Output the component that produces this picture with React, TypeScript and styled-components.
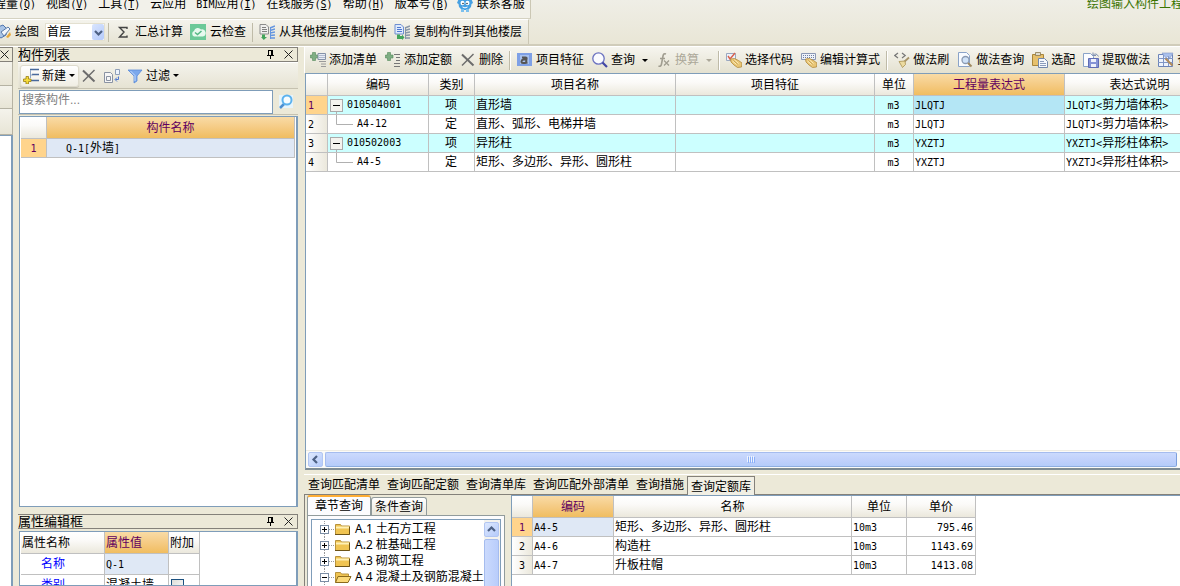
import React from "react";
import styled, { createGlobalStyle, css } from "styled-components";

const line = "#c0c0c0";
const blue = "#7f9db9";
const headGradient = "linear-gradient(#ffffff, #fbfaf8 40%, #ebe8dc)";
const hotGradient = "linear-gradient(#f9dba6, #f5cb84 50%, #f0bd60)";

const Global = createGlobalStyle`
  * { box-sizing: border-box; }
  html, body { margin: 0; height: 100%; background: #ece9d8; }
  body, button, input, select, table {
    font-family: "Liberation Sans", "Noto Sans CJK SC", sans-serif;
    font-size: 12px;
    line-height: 16px;
    color: #000;
  }
  button { border: 0; padding: 0; background: none; white-space: nowrap; }
`;

const Shell = styled.div`
  display: flex;
  flex-direction: column;
  height: 100vh;
  overflow: hidden;
  background: #ece9d8;
`;

const Top = styled.header`
  display: flex;
  justify-content: space-between;
  height: 46px;
  flex: none;
  background: linear-gradient(#efeee6, #e9e6d6);
  border-bottom: 2px solid #d0ccba;
  white-space: nowrap;
`;

const Bars = styled.div`
  flex: none;
`;

const MenuBar = styled.nav`
  display: flex;
  gap: 10px;
  height: 19px;
  width: 531px;
  overflow: hidden;
  background: #f2f1ea;
  border-right: 1px solid #cbc7b4;
  border-bottom: 1px solid #d5d2c2;
`;

const MenuItem = styled.button<{ $lead?: boolean; $tight?: boolean }>`
  flex: none;
  display: flex;
  align-items: center;
  gap: 4px;
  height: 16px;
  margin-top: -4px;
  margin-left: ${(p) => (p.$lead ? "-6px" : p.$tight ? "-2px" : "0")};
`;

const Code = styled.span`
  font-family: "DejaVu Sans Mono", "Noto Sans CJK SC", monospace;
  font-size: 10px;
`;

const Project = styled.div`
  margin: -4px -15px 0 0;
  color: #3a7400;
`;

const TopTools = styled.div`
  display: flex;
  align-items: center;
  gap: 7px;
  height: 25px;
  width: 529px;
  overflow: hidden;
  background: linear-gradient(#f4f3ec, #e6e3d3);
  border-top: 1px solid #fff;
  border-right: 1px solid #cbc7b4;
`;

const Tool = styled.button<{ $gap?: number; $off?: boolean; $lead?: boolean }>`
  flex: none;
  display: flex;
  align-items: center;
  gap: ${(p) => p.$gap ?? 3}px;
  height: 20px;
  margin-left: ${(p) => (p.$lead ? "-5px" : "0")};
  color: ${(p) => (p.$off ? "#aca899" : "#000")};
  svg { flex: none; }
`;

const Sep = styled.span<{ $w?: number }>`
  flex: none;
  width: ${(p) => p.$w ?? 2}px;
  height: 19px;
  margin: 0 -${(p) => p.$w ?? 2}px;
  background: #bfbba8;
  border-right: ${(p) => (p.$w === 1 ? "0" : "1px solid #fff")};
`;

const Caret = styled.i<{ $near?: boolean }>`
  width: 6px;
  margin-left: ${(p) => (p.$near ? 0 : 4)}px;
  border: 3px solid transparent;
  border-top-color: currentColor;
  border-bottom: 0;
`;

const FloorBox = styled.div`
  position: relative;
  flex: none;
  width: 60px;
  height: 18px;
  margin: 0 -3px 0 -1px;
`;

const Floor = styled.select`
  appearance: none;
  width: 100%;
  height: 100%;
  border: 1px solid #e3e0d0;
  border-radius: 0;
  background: #fff;
  padding: 0 0 0 1px;
  line-height: 14px;
`;

const FloorArrow = styled.span`
  position: absolute;
  right: 1px;
  top: 1px;
  width: 12px;
  height: 16px;
  display: grid;
  place-items: center;
  background: linear-gradient(135deg, #d9e5fe, #b4cafb);
  border-radius: 2px;
  pointer-events: none;
`;

const Body = styled.div`
  flex: 1;
  min-height: 0;
  display: flex;
  gap: 5px;
  border-top: 1px solid #fff;
`;

const Edge = styled.aside`
  flex: none;
  width: 13px;
  display: flex;
  flex-direction: column;
`;

const EdgeTitle = styled.div`
  height: 15px;
  border: 1px solid #84817a;
  border-left: 0;
  display: flex;
  align-items: center;
`;

const EdgeBar = styled.div<{ $h: number }>`
  height: ${(p) => p.$h}px;
  background: linear-gradient(#f4f3ec, #e8e5d6);
  border-right: 1px solid #b5b2a3;
  border-bottom: 1px solid #b5b2a3;
`;

const EdgeView = styled.div`
  flex: 1;
  background: #fff;
  border-top: 1px solid ${blue};
  border-right: 2px solid ${blue};
`;

const Side = styled.aside`
  flex: none;
  width: 280px;
  display: flex;
  flex-direction: column;
`;

const Dock = styled.section<{ $grow?: boolean }>`
  flex: ${(p) => (p.$grow ? "1" : "none")};
  height: ${(p) => (p.$grow ? "auto" : "72px")};
  min-height: 0;
  overflow: hidden;
  display: flex;
  flex-direction: column;
  margin-top: ${(p) => (p.$grow ? "0" : "7px")};
`;

const DockTitle = styled.div`
  flex: none;
  display: flex;
  align-items: center;
  height: 15px;
  border: 1px solid #84817a;
  border-left: 0;
  h2 {
    flex: 1;
    margin: 0;
    font-size: 13px;
    font-weight: 400;
    line-height: 13px;
  }
`;

const TitleButton = styled.button`
  display: grid;
  place-items: center;
  width: 18px;
  height: 13px;
`;

const DockTools = styled.div`
  flex: none;
  display: flex;
  align-items: center;
  gap: 7px;
  height: 27px;
  padding-left: 2px;
  background: linear-gradient(#f4f3ec, #e6e3d3);
  border-bottom: 1px solid #c6c2b0;
  border-top: 1px solid #fff;
`;

const NewButton = styled(Tool)`
  height: 22px;
  padding: 0 3px 0 2px;
  margin-right: -5px;
  border: 1px solid #dedbcd;
  border-radius: 3px;
  background: linear-gradient(#fff, #f0eee4);
  box-shadow: 0 1px 1px #b9b6a8;
`;

const SearchRow = styled.div`
  flex: none;
  display: flex;
  align-items: center;
  height: 26px;
  border-bottom: 1px solid #c6c2b0;
  input {
    flex: 1;
    min-width: 0;
    height: 24px;
    margin-left: 1px;
    border: 1px solid ${blue};
    background: #fff;
    padding: 0 2px 4px;
  }
  input::placeholder { color: #808080; opacity: 1; }
`;

const SearchButton = styled.button`
  display: grid;
  place-items: center;
  width: 25px;
  height: 24px;
`;

const Sheet = styled.div`
  flex: 1;
  min-height: 0;
  overflow: hidden;
  background: #fff;
  border: 1px solid ${blue};
`;

const DockSheet = styled(Sheet)<{ $top: number }>`
  margin: ${(p) => p.$top}px 0 0 1px;
  border-right-width: 2px;
  padding-left: 1px;
`;

const Table = styled.table<{ $fill?: boolean }>`
  table-layout: fixed;
  width: ${(p) => (p.$fill ? "calc(100% - 1px)" : "1px")};
  border-collapse: separate;
  border-spacing: 0;
`;

const cell = css`
  overflow: hidden;
  white-space: nowrap;
  font-weight: 400;
  border-right: 1px solid ${line};
  border-bottom: 1px solid ${line};
`;

const Th = styled.th<{ $hot?: boolean; $left?: boolean }>`
  ${cell}
  height: 22px;
  padding: 0 1px;
  text-align: ${(p) => (p.$left ? "left" : "center")};
  background: ${(p) => (p.$hot ? hotGradient : headGradient)};
  color: ${(p) => (p.$hot ? "#600060" : "#000")};
`;

const RowNo = styled.th<{ $hot?: boolean; $left?: boolean }>`
  ${cell}
  height: 19px;
  padding: 0 2px;
  text-align: ${(p) => (p.$left ? "left" : "center")};
  background: ${(p) => (p.$hot ? "#ffd48c" : "linear-gradient(90deg, #fff, #ebe8dc)")};
  color: ${(p) => (p.$hot ? "#600060" : "#000")};
`;

const Td = styled.td<{ $bg?: string; $align?: string; $pad?: number; $color?: string; $tall?: boolean }>`
  ${cell}
  height: ${(p) => (p.$tall ? 21 : 19)}px;
  padding: 0 2px 0 ${(p) => p.$pad ?? 1}px;
  text-align: ${(p) => p.$align ?? "left"};
  background: ${(p) => p.$bg ?? "#fff"};
  color: ${(p) => p.$color ?? "#000"};
`;

const TreeCell = styled.div`
  display: flex;
  align-items: center;
  gap: 4px;
  height: 18px;
  svg { flex: none; }
`;

const Check = styled.input`
  appearance: none;
  display: block;
  width: 13px;
  height: 13px;
  margin: 0;
  border: 1px solid #1c5180;
  background: linear-gradient(135deg, #dcdcd7, #fff);
`;

const Main = styled.main`
  flex: 1;
  min-width: 0;
  display: flex;
  flex-direction: column;
  margin-left: 1px;
`;

const MainTools = styled.div`
  flex: none;
  display: flex;
  align-items: center;
  gap: 8px;
  height: 26px;
  padding-left: 5px;
  overflow: hidden;
  background: linear-gradient(#f6f5ef, #e4e1d0);
  border-left: 1px solid #fff;
`;

const MainSheet = styled(Sheet)`
  margin-left: 1px;
  border-width: 1px 0 2px 1px;
  border-bottom-color: #7e8c94;
  display: flex;
  flex-direction: column;
`;

const Grow = styled.div`
  flex: 1;
  min-height: 0;
  overflow: hidden;
`;

const HBar = styled.div`
  flex: none;
  display: flex;
  gap: 2px;
  height: 18px;
  padding: 1px 3px 2px 2px;
  background: #fbfbf8;
  border-top: 1px solid #eeece4;
`;

const ScrollButton = styled.button`
  display: grid;
  place-items: center;
  width: 15px;
  height: 15px;
  border: 1px solid #b2c6f2;
  border-radius: 2px;
  background: linear-gradient(135deg, #dde8fe, #b5cbfb);
`;

const HThumb = styled.div`
  flex: 1;
  display: grid;
  place-items: center;
  height: 15px;
  border: 1px solid #a5bcee;
  border-right-color: #7c9fdc;
  border-bottom-color: #8eaee0;
  border-radius: 2px;
  background: linear-gradient(#cbdafd, #bfd0fb 60%, #b4ccfa);
`;

const QueryTabs = styled.div`
  flex: none;
  display: flex;
  gap: 7px;
  height: 21px;
  margin-top: 4px;
  padding-left: 4px;
  border-top: 1px solid #fff;
  border-bottom: 1px solid #84817a;
`;

const QueryTab = styled.button<{ $on?: boolean }>`
  flex: none;
  height: 19px;
  ${(p) =>
    p.$on &&
    css`
      margin: 1px 0 0 -4px;
      padding: 1px 3px 0;
      border: 1px solid #84817a;
      border-bottom: 0;
      background: #f1efe4;
    `}
`;

const Lower = styled.div`
  flex: none;
  display: flex;
  gap: 6px;
  height: 91px;
  overflow: hidden;
`;

const Chapter = styled.div`
  flex: none;
  width: 201px;
  display: flex;
  flex-direction: column;
  padding-left: 2px;
  border-left: 1px solid #84817a;
`;

const ChapterTabs = styled.div`
  display: flex;
  align-items: flex-end;
  height: 20px;
`;

const ChapterTab = styled.button<{ $on?: boolean }>`
  height: ${(p) => (p.$on ? 20 : 18)}px;
  width: ${(p) => (p.$on ? 64 : 56)}px;
  border: 1px solid #919b9c;
  border-bottom: 0;
  border-top: ${(p) => (p.$on ? "2px solid #ffae34" : "1px solid #919b9c")};
  border-radius: 3px 3px 0 0;
  background: ${(p) => (p.$on ? "#fcfcfe" : "linear-gradient(#fff, #ebe8dc)")};
`;

const ChapterPane = styled.div`
  flex: 1;
  min-height: 0;
  padding: 3px 3px 0;
  background: #fcfcfe;
  border: 1px solid #919b9c;
  border-bottom: 0;
`;

const TreeBox = styled.div`
  display: flex;
  height: 100%;
  overflow: hidden;
  background: #fff;
  border: 1px solid ${blue};
  border-bottom: 0;
`;

const Tree = styled.ul`
  flex: 1;
  min-width: 0;
  margin: 0;
  padding: 1px 0 0 7px;
  list-style: none;
  overflow: hidden;
`;

const TreeItem = styled.li`
  display: flex;
  align-items: center;
  height: 16px;
  white-space: nowrap;
  font-family: "Noto Sans", "Noto Sans CJK SC", sans-serif;
  svg { flex: none; margin-right: 3px; }
`;

const VBar = styled.div`
  flex: none;
  width: 16px;
  padding: 2px 1px 0 0;
  background: #f4f3ee;
`;

const VThumb = styled.div`
  height: 100px;
  margin-top: 2px;
  border: 1px solid #a5bcee;
  border-radius: 2px;
  background: linear-gradient(90deg, #cbdafd, #b9cdfb);
`;

const LowerSheet = styled(Sheet)`
  border-width: 1px 0 0 1px;
`;

type Kind =
  | "pen" | "sigma" | "cloud" | "copyFrom" | "copyTo" | "new" | "x" | "dup" | "filter"
  | "lens" | "addList" | "addQuota" | "a" | "find" | "fx" | "pick" | "keys" | "brush"
  | "docFind" | "paste" | "save" | "gridPen" | "face";

const Hand = () => (
  <g>
    <path d="M4.500 7l4-.5 4 2 3.500 2.500-.5 4-4 .5-3.500-2.500-3-3z" fill="#e9c676" stroke="#b18a3c" strokeWidth=".8" />
    <path d="M6.500 9l4 3.500M8.500 8l4 3.500" stroke="#fff0c0" />
    <path d="M7.500 8.500l4 3.500" stroke="#b98f38" strokeWidth=".7" />
  </g>
);

const Building = ({ c }: { c: string }) => (
  <g stroke={c} strokeWidth="1.500">
    <path d="M11 4l5-2M11 6.500l5-1.500M11 9l5-1M11 11.500l5-.5M11 14h5" />
    <path d="M11.500 3v12" strokeWidth="1" />
  </g>
);

const art: Record<Kind, React.ReactNode> = {
  pen: (
    <g>
      <path d="M3 3l5-2 4 4-1 6-5 3-5-3z" fill="#a9c4e6" stroke="#4f75ae" />
      <path d="M6 8l7-5 2 2-6 7z" fill="#f2f6fb" stroke="#5b7aa8" />
      <path d="M11 13l4-5 1 3-3 3z" fill="#e8a93c" />
    </g>
  ),
  sigma: <path d="M12 5V3.500H4.500L9 8l-4.500 5H12v-1.500" fill="none" stroke="#444" strokeWidth="1.400" />,
  cloud: (
    <g>
      <rect width="16" height="16" fill="#6cc998" />
      <path d="M4 12.500a3 3 0 010-5.500 4 4 0 017-1.500 3.500 3.500 0 012 7z" fill="#e6f9ee" />
      <path d="M5 8.500l2.500 2 4-3.500" fill="none" stroke="#54b884" strokeWidth="1.500" />
    </g>
  ),
  copyFrom: (
    <g fill="none">
      <path d="M1 .500h6L9.500 3v7H1z" fill="#f0f0ee" stroke="#8c8c8c" />
      <path d="M3 3.500h4M3 5.500h5M3 7.500h5" stroke="#808080" />
      <Building c="#6596e0" />
      <path d="M3 10.500h3V13h2l-3.200 3L2 13h1z" fill="#43a45c" />
    </g>
  ),
  copyTo: (
    <g fill="none">
      <path d="M1 .500h6L9.500 3v7H1z" fill="#dfeafc" stroke="#6f8fd0" />
      <path d="M3 3.500h4M3 5.500h5M3 7.500h5" stroke="#4f78d0" />
      <Building c="#8795a8" />
      <path d="M3 10.500h3V12h2v-1.500l2.500 3-2.500 2.500v-1H3z" fill="#43a45c" />
    </g>
  ),
  new: (
    <g>
      <path d="M7 1.500h9M9 6.500h7M8 12.500h8" stroke="#48699c" strokeWidth="1.600" />
      <path d="M7.500 2v8M7.500 7h2" stroke="#8ea4c4" />
      <path d="M3 8.500h2.500V11H8v2.500H5.500V16H3v-2.500H.500V11H3z" fill="#f6dc3c" stroke="#9a7f10" strokeWidth=".8" />
    </g>
  ),
  x: (
    <g stroke="#6c6c6c">
      <path d="M2 2.500l11.500 11" strokeWidth="2" />
      <path d="M13.500 2L2 13.500" strokeWidth="1.500" />
    </g>
  ),
  dup: (
    <g fill="none" stroke="#8a93a3">
      <path d="M.500 4.500h6l2 2v8h-8z" fill="#f6f6f6" />
      <path d="M2.500 8.500h4v4h-4z" />
      <path d="M11.500 1.500h4v5h-4z" fill="#eef4fd" stroke="#8f9fb8" />
      <path d="M14.500 8.500v3h-3M13 9.500l-2 2 2 2" stroke="#4f78d0" />
    </g>
  ),
  filter: (
    <g>
      <path d="M1 2h14l-5 6v5l-3 2V8z" fill="#7ba8ec" stroke="#5b8bd8" strokeWidth=".8" />
      <path d="M3.500 3l4.500 4.500V13" fill="none" stroke="#c4dafa" />
    </g>
  ),
  lens: (
    <g fill="none">
      <rect x="1" y="1" width="14" height="13" fill="#e6f4fc" />
      <path d="M6 10l-4 4" stroke="#4d8fd0" strokeWidth="2.500" />
      <circle cx="9" cy="6" r="4.500" fill="#f6fcff" stroke="#5cb2ee" strokeWidth="2" />
    </g>
  ),
  addList: (
    <g>
      <path d="M2.500.500h3V3H8v3H5.500v2.500h-3V6H.500V3h2z" fill="#7fae84" stroke="#55895b" strokeWidth=".6" />
      <path d="M8 1.500h7.500v6H8z" fill="#e7ecf4" stroke="#8492a8" />
      <path d="M9.500 3.500h5M9.500 5.500h5" stroke="#7888a8" strokeDasharray="1 1" />
      <path d="M9 9.500h7M11 12h5M11 14.500h5" stroke="#9a9a9a" />
    </g>
  ),
  addQuota: (
    <g>
      <path d="M2.500.500h3V3H8v3H5.500v2.500h-3V6H.500V3h2z" fill="#7fae84" stroke="#55895b" strokeWidth=".6" />
      <path d="M9 2.500h6M11 5.500h4M11 8.500h4M9 11.500h6M9 14.500h6" stroke="#777" strokeWidth="1.200" />
    </g>
  ),
  a: (
    <g>
      <rect y="1" width="15" height="13" fill="#7ea0e6" />
      <rect x="3" y="3" width="9" height="9" fill="#a8c2ee" />
      <path d="M5 5.500h3.500q1.500 0 1 1.500l-.5 4M9.500 7.500H6.500Q4.500 8 4.500 9.500T6 11h2l2.500-.5" fill="none" stroke="#555" strokeWidth="2" />
    </g>
  ),
  find: (
    <g>
      <circle cx="6.500" cy="6.500" r="5.700" fill="#fafbff" stroke="#6b72c0" strokeWidth="1.300" />
      <path d="M10.500 10.500l4.500 4.500" stroke="#4347a4" strokeWidth="2.200" />
    </g>
  ),
  fx: (
    <g fill="none" stroke="#a09d90" strokeWidth="1.600">
      <path d="M10 2Q7.500 1 7 4L5.500 12Q5 15 2.500 14M4 6.500h5" />
      <path d="M8 8.500l5 5M13 8.500l-5 5" strokeWidth="1.300" />
    </g>
  ),
  pick: (
    <g>
      <path d="M.500 1.500h9v7h-9z" fill="#eef2fa" stroke="#9aa8c0" />
      <path d="M2 4l2 3 5-6" fill="none" stroke="#d8604c" strokeWidth="1.400" />
      <Hand />
    </g>
  ),
  keys: (
    <g>
      <path d="M.500 1.500h14v6H.500z" fill="#eef2fa" stroke="#8b98b4" />
      <path d="M2 3.500h11M2 5.500h11" stroke="#70809f" strokeDasharray="1 1" />
      <Hand />
    </g>
  ),
  brush: (
    <g fill="none">
      <path d="M4 1L.800 3.500 4 6M8 1l3.200 2.500L8 6" stroke="#777" strokeWidth="1.200" />
      <path d="M15 5.500l-5 4.500" stroke="#a9956a" strokeWidth="1.800" />
      <path d="M5 9.500l6-.5.500 3.500L8.500 15.500z" fill="#ecdba0" stroke="#a89050" strokeWidth=".8" />
    </g>
  ),
  docFind: (
    <g>
      <path d="M1.500.500h8l3 3v11h-11z" fill="#f8fbff" stroke="#8aa3c8" />
      <circle cx="8.500" cy="8" r="3.500" fill="#cfe2f8" stroke="#8a9ab2" strokeWidth="1.300" />
      <path d="M11 11l3.500 3.500" stroke="#a08a60" strokeWidth="2" />
    </g>
  ),
  paste: (
    <g>
      <path d="M.500 2.500h11v11H.500z" fill="#e6c06c" stroke="#a9853a" />
      <path d="M3.500.500h5v3h-5z" fill="#e0dccc" stroke="#8a7a50" strokeWidth=".8" />
      <path d="M6.500 6.500h6l3 3v6h-9z" fill="#f5f8fd" stroke="#7287ab" />
      <path d="M8 9.500h4M8 11.500h6M8 13.500h6" stroke="#8b9cbc" />
    </g>
  ),
  save: (
    <g>
      <path d="M.500 1.500h7l3 3v10h-10z" fill="#fbfcff" stroke="#8aa3c8" />
      <path d="M10 3.500q3-3.500 5.500 1M10 .500v3h3" fill="none" stroke="#7f8fb0" />
      <path d="M5.500 6.500h10v9h-10z" fill="#8593d6" stroke="#5f6cb4" />
      <path d="M8 7h5v3H8zM8 12h5v3H8z" fill="#eef1fb" />
    </g>
  ),
  gridPen: (
    <g>
      <path d="M.500 2.500h14v12H.500z" fill="#eef3fc" stroke="#6b83b8" />
      <path d="M0 6.500h15M0 10.500h15M5.500 2v12M10.500 2v12" stroke="#7f96c6" />
      <path d="M4 1h11l-3 5-2-2-2 2z" fill="#a9c0ec" stroke="#7f96c6" strokeWidth=".6" />
      <path d="M7.500 6.500l7 7" stroke="#b08a58" strokeWidth="2" />
    </g>
  ),
  face: (
    <g>
      <path d="M2 2q6-4 12 0l2 5-1.500 1-.5 3-3 3H5l-3-3-.5-3L0 7z" fill="#46a0e2" />
      <path d="M4 13h3v3H4zM9 13h3v3H9z" fill="#7cc0ee" />
      <ellipse cx="5.500" cy="7" rx="2" ry="2.300" fill="#fff" />
      <ellipse cx="10.500" cy="7" rx="2" ry="2.300" fill="#fff" />
      <circle cx="6" cy="7.500" r=".8" fill="#234" />
      <circle cx="10" cy="7.500" r=".8" fill="#234" />
      <path d="M5.500 11q2.500 1.800 5 0" fill="none" stroke="#fff" />
    </g>
  ),
};

const Icon = ({ kind }: { kind: Kind }) => (
  <svg width="16" height="16" viewBox="0 0 16 16" fill="none" aria-hidden="true">
    {art[kind]}
  </svg>
);

const Pin = () => (
  <svg width="9" height="11" viewBox="0 0 9 11" aria-hidden="true">
    <path d="M2.500 1v5M2 1.500h4M1 6.500h7M4.500 7v3" stroke="#000" fill="none" />
    <path d="M6 1v5" stroke="#000" strokeWidth="2" />
  </svg>
);

const Close = () => (
  <svg width="9" height="9" viewBox="0 0 9 9" aria-hidden="true">
    <path d="M.500 .500l8 8M8.500 .500l-8 8" stroke="#222" />
  </svg>
);

const Chevron = ({ d }: { d: string }) => (
  <svg width="9" height="9" viewBox="0 0 9 9" aria-hidden="true">
    <path d={d} fill="none" stroke="#4d6185" strokeWidth="2.200" />
  </svg>
);

/** Latin runs are set in the narrow mono face, CJK runs in the regular one. */
const Mixed = ({ text }: { text: string }) => (
  <>
    {text.split(/([\x20-\x7e]+)/).map((run, i) =>
      /^[\x20-\x7e]+$/.test(run) ? <Code key={i}>{run}</Code> : run
    )}
  </>
);

const menus: [string, string?][] = [
  ["程量", "Q"], ["视图", "V"], ["工具", "T"], ["云应用"], ["BIM应用", "I"],
  ["在线服务", "S"], ["帮助", "H"], ["版本号", "B"],
];

const items = [
  { code: "010504001", kind: "项", name: "直形墙", expr: "JLQTJ", note: "JLQTJ<剪力墙体积>" },
  { code: "A4-12", kind: "定", name: "直形、弧形、电梯井墙", expr: "JLQTJ", note: "JLQTJ<剪力墙体积>" },
  { code: "010502003", kind: "项", name: "异形柱", expr: "YXZTJ", note: "YXZTJ<异形柱体积>" },
  { code: "A4-5", kind: "定", name: "矩形、多边形、异形、圆形柱", expr: "YXZTJ", note: "YXZTJ<异形柱体积>" },
];

const quotas = [
  { code: "A4-5", name: "矩形、多边形、异形、圆形柱", price: "795.46" },
  { code: "A4-6", name: "构造柱", price: "1143.69" },
  { code: "A4-7", name: "升板柱帽", price: "1413.08" },
];

const chapters = ["A.1 土石方工程", "A.2 桩基础工程", "A.3 砌筑工程", "A 4 混凝土及钢筋混凝土工程"];

const Cols = ({ widths }: { widths: (number | undefined)[] }) => (
  <colgroup>
    {widths.map((w, i) => <col key={i} style={w ? { width: w } : undefined} />)}
  </colgroup>
);

const Title = ({ text }: { text: string }) => (
  <DockTitle>
    <h2>{text}</h2>
    <TitleButton aria-label="固定"><Pin /></TitleButton>
    <TitleButton aria-label="关闭"><Close /></TitleButton>
  </DockTitle>
);

const ItemBranch = ({ parent }: { parent: boolean }) =>
  parent ? (
    <svg width="14" height="18" viewBox="0 0 14 18" aria-hidden="true">
      <rect x="1.500" y="3.500" width="12" height="12" fill="#f4f3ee" stroke="#aaa" />
      <path d="M4 9.500h7" stroke="#000" />
      <path d="M7.500 16v2" stroke="#b0b0b0" />
    </svg>
  ) : (
    <svg width="24" height="18" viewBox="0 0 24 18" aria-hidden="true">
      <path d="M7.500 0v9.500H24" fill="none" stroke="#b0b0b0" />
    </svg>
  );

const Folder = ({ open }: { open: boolean }) => (
  <svg width="33" height="16" viewBox="0 0 33 16" aria-hidden="true">
    <path d="M5.500 0v4M5.500 13v3M10 8.500h5" stroke="#999" strokeDasharray="1 1" />
    <rect x="1.500" y="4.500" width="8" height="8" fill="#fff" stroke="#7b8ea5" />
    <path d={open ? "M3 8.500h5" : "M3 8.500h5M5.500 6v5"} stroke="#000" />
    {open ? (
      <g>
        <path d="M16.500 13.500v-10h5l1 1.500h7v3" fill="#f0c452" stroke="#b8933c" />
        <path d="M19 7.500h13l-3 6H16.500z" fill="#fbd978" stroke="#8a6a1c" />
      </g>
    ) : (
      <g>
        <path d="M16.500 3.500h5l1 1.500h8v8.500h-14z" fill="#f0c452" stroke="#b8933c" />
        <path d="M17 6.500h13" stroke="#fff0b4" strokeWidth="2" />
        <path d="M16 13.500h14.500V6" fill="none" stroke="#6d5418" />
      </g>
    )}
  </svg>
);

export default function App() {
  return (
    <Shell>
      <Global />
      <Top>
        <Bars>
          <MenuBar>
            {menus.map(([name, key], i) => (
              <MenuItem key={name} $lead={i === 0}>
                <span>
                  <Mixed text={name} />
                  {key && <Code>(<u>{key}</u>)</Code>}
                </span>
              </MenuItem>
            ))}
            <MenuItem $tight><Icon kind="face" />联系客服</MenuItem>
          </MenuBar>
          <TopTools>
            <Tool $gap={4} $lead><Icon kind="pen" />绘图</Tool>
            <FloorBox>
              <Floor aria-label="楼层"><option>首层</option></Floor>
              <FloorArrow><Chevron d="M1 3l3.500 3.500L8 3" /></FloorArrow>
            </FloorBox>
            <Sep $w={1} />
            <Tool $gap={4}><Icon kind="sigma" />汇总计算</Tool>
            <Tool $gap={4}><Icon kind="cloud" />云检查</Tool>
            <Sep $w={1} />
            <Tool $gap={4}><Icon kind="copyFrom" />从其他楼层复制构件</Tool>
            <Tool $gap={4}><Icon kind="copyTo" />复制构件到其他楼层</Tool>
          </TopTools>
        </Bars>
        <Project>绘图输入构件工程量</Project>
      </Top>

      <Body>
        <Edge>
          <EdgeTitle><Close /></EdgeTitle>
          <EdgeBar $h={24} />
          <EdgeBar $h={23} />
          <EdgeBar $h={26} />
          <EdgeView />
        </Edge>

        <Side>
          <Dock $grow>
            <Title text="构件列表" />
            <DockTools>
              <NewButton><Icon kind="new" />新建<Caret $near /></NewButton>
              <Tool aria-label="删除构件"><Icon kind="x" /></Tool>
              <Tool aria-label="复制构件"><Icon kind="dup" /></Tool>
              <Tool><Icon kind="filter" />过滤<Caret $near /></Tool>
            </DockTools>
            <SearchRow>
              <input aria-label="搜索构件" placeholder="搜索构件..." />
              <SearchButton aria-label="搜索"><Icon kind="lens" /></SearchButton>
            </SearchRow>
            <DockSheet $top={1}>
              <Table $fill>
                <Cols widths={[26, undefined]} />
                <thead><tr><Th /><Th $hot>构件名称</Th></tr></thead>
                <tbody>
                  <tr>
                    <RowNo $hot><Code>1</Code></RowNo>
                    <Td $bg="#dfe8f5" $pad={19}><Mixed text="Q-1[外墙]" /></Td>
                  </tr>
                </tbody>
              </Table>
            </DockSheet>
          </Dock>
          <Dock>
            <Title text="属性编辑框" />
            <DockSheet $top={2}>
              <Table>
                <Cols widths={[84, 64, 31]} />
                <thead><tr><Th $left>属性名称</Th><Th $hot $left>属性值</Th><Th $left>附加</Th></tr></thead>
                <tbody>
                  <tr>
                    <Td $tall $pad={20} $color="#0000ff">名称</Td>
                    <Td $tall $bg="#dfe8f5"><Code>Q-1</Code></Td>
                    <Td $tall />
                  </tr>
                  <tr>
                    <Td $tall $pad={20} $color="#0000ff">类别</Td>
                    <Td $tall>混凝土墙</Td>
                    <Td $tall $pad={2}><Check type="checkbox" aria-label="附加类别" /></Td>
                  </tr>
                </tbody>
              </Table>
            </DockSheet>
          </Dock>
        </Side>

        <Main>
          <MainTools>
            <Tool><Icon kind="addList" />添加清单</Tool>
            <Tool><Icon kind="addQuota" />添加定额</Tool>
            <Tool><Icon kind="x" />删除</Tool>
            <Sep />
            <Tool><Icon kind="a" />项目特征</Tool>
            <Tool><Icon kind="find" />查询<Caret /></Tool>
            <Tool $off><Icon kind="fx" />换算<Caret /></Tool>
            <Sep />
            <Tool><Icon kind="pick" />选择代码</Tool>
            <Tool><Icon kind="keys" />编辑计算式</Tool>
            <Sep />
            <Tool><Icon kind="brush" />做法刷</Tool>
            <Tool><Icon kind="docFind" />做法查询</Tool>
            <Tool><Icon kind="paste" />选配</Tool>
            <Tool><Icon kind="save" />提取做法</Tool>
            <Tool><Icon kind="gridPen" />查看</Tool>
          </MainTools>
          <MainSheet>
            <Grow>
              <Table>
                <Cols widths={[22, 101, 46, 201, 199, 39, 151, 150]} />
                <thead>
                  <tr>
                    <Th /><Th>编码</Th><Th>类别</Th><Th>项目名称</Th><Th>项目特征</Th><Th>单位</Th>
                    <Th $hot>工程量表达式</Th><Th>表达式说明</Th>
                  </tr>
                </thead>
                <tbody>
                  {items.map((r, i) => {
                    const parent = r.kind === "项";
                    const bg = parent ? "#ccffff" : "#fff";
                    return (
                      <tr key={r.code}>
                        <RowNo $left $hot={i === 0}><Code>{i + 1}</Code></RowNo>
                        <Td $bg={bg}>
                          <TreeCell><ItemBranch parent={parent} /><Code>{r.code}</Code></TreeCell>
                        </Td>
                        <Td $bg={bg} $align="center">{r.kind}</Td>
                        <Td $bg={bg}>{r.name}</Td>
                        <Td $bg={bg} />
                        <Td $bg={bg} $align="center"><Code>m3</Code></Td>
                        <Td $bg={i === 0 ? "#b4e6f5" : bg}><Code>{r.expr}</Code></Td>
                        <Td $bg={bg}><Mixed text={r.note} /></Td>
                      </tr>
                    );
                  })}
                </tbody>
              </Table>
            </Grow>
            <HBar>
              <ScrollButton aria-label="向左滚动"><Chevron d="M6 1L2.500 4.500 6 8" /></ScrollButton>
              <HThumb>
                <svg width="8" height="7" viewBox="0 0 8 7" aria-hidden="true">
                  <path d="M.500 0v6M2.500 0v6M4.500 0v6M6.500 0v6" stroke="#eef4fe" />
                  <path d="M1.500 1v6M3.500 1v6M5.500 1v6M7.500 1v6" stroke="#8cb0f8" />
                </svg>
              </HThumb>
            </HBar>
          </MainSheet>

          <QueryTabs>
            <QueryTab>查询匹配清单</QueryTab>
            <QueryTab>查询匹配定额</QueryTab>
            <QueryTab>查询清单库</QueryTab>
            <QueryTab>查询匹配外部清单</QueryTab>
            <QueryTab>查询措施</QueryTab>
            <QueryTab $on>查询定额库</QueryTab>
          </QueryTabs>
          <Lower>
            <Chapter>
              <ChapterTabs>
                <ChapterTab $on>章节查询</ChapterTab>
                <ChapterTab>条件查询</ChapterTab>
              </ChapterTabs>
              <ChapterPane>
                <TreeBox>
                  <Tree>
                    {chapters.map((c, i) => (
                      <TreeItem key={c}><Folder open={i === 3} />{c}</TreeItem>
                    ))}
                  </Tree>
                  <VBar>
                    <ScrollButton aria-label="向上滚动"><Chevron d="M1 6l3.500-3.500L8 6" /></ScrollButton>
                    <VThumb />
                  </VBar>
                </TreeBox>
              </ChapterPane>
            </Chapter>
            <LowerSheet>
              <Table>
                <Cols widths={[21, 81, 238, 55, 69]} />
                <thead>
                  <tr><Th /><Th $hot>编码</Th><Th>名称</Th><Th>单位</Th><Th>单价</Th></tr>
                </thead>
                <tbody>
                  {quotas.map((q, i) => (
                    <tr key={q.code}>
                      <RowNo $hot={i === 0}><Code>{i + 1}</Code></RowNo>
                      <Td $bg={i === 0 ? "#dfe8f5" : "#fff"}><Code>{q.code}</Code></Td>
                      <Td>{q.name}</Td>
                      <Td><Code>10m3</Code></Td>
                      <Td $align="right"><Code>{q.price}</Code></Td>
                    </tr>
                  ))}
                </tbody>
              </Table>
            </LowerSheet>
          </Lower>
        </Main>
      </Body>
    </Shell>
  );
}
